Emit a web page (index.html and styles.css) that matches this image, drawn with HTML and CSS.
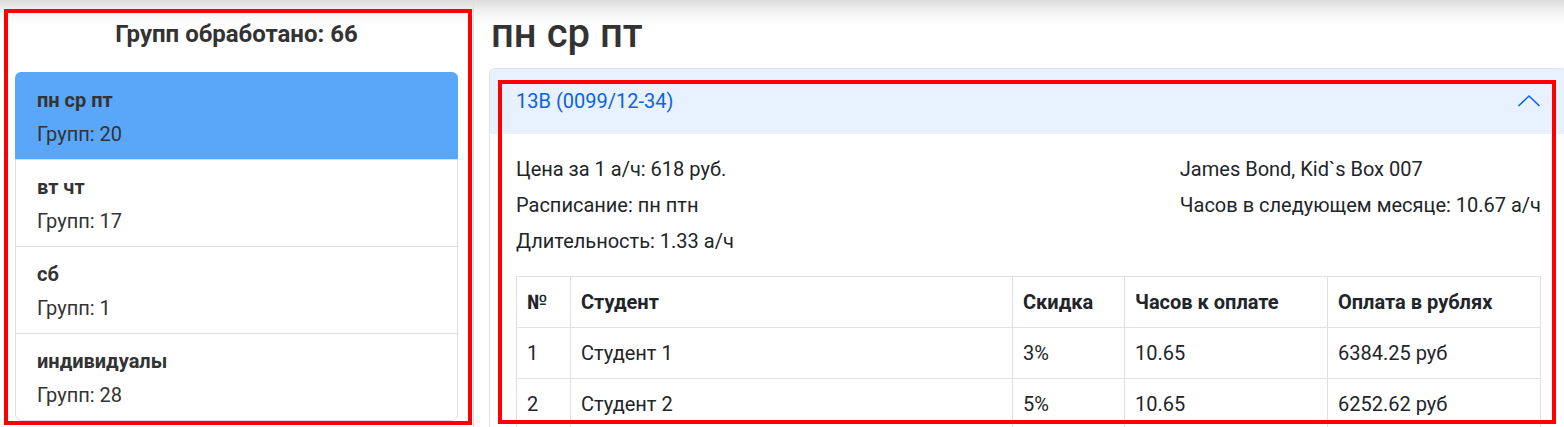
FILE: index.html
```html
<!DOCTYPE html>
<html lang="ru">
<head>
<meta charset="utf-8">
<title>Группы</title>
<link rel="stylesheet" href="styles.css">
</head>
<body>
<div class="page">
  <aside class="sidebar">
    <h2 class="sidebar-title">Групп обработано: 66</h2>
    <ul class="groups">
      <li class="group active">
        <div class="group-name">пн ср пт</div>
        <div class="group-count">Групп: 20</div>
      </li>
      <li class="group">
        <div class="group-name">вт чт</div>
        <div class="group-count">Групп: 17</div>
      </li>
      <li class="group">
        <div class="group-name">сб</div>
        <div class="group-count">Групп: 1</div>
      </li>
      <li class="group">
        <div class="group-name">индивидуалы</div>
        <div class="group-count">Групп: 28</div>
      </li>
    </ul>
  </aside>
  <main class="content">
    <h1 class="day-title">пн ср пт</h1>
    <section class="card">
      <div class="card-header">
        <span class="card-title">13В (0099/12-34)</span>
        <svg class="chevron" width="24" height="14" viewBox="0 0 24 14" aria-hidden="true">
          <polyline points="1.5,12 12,2 22.5,12" fill="none" stroke="#0c63e4" stroke-width="1.6"/>
        </svg>
      </div>
      <div class="card-body">
        <div class="info">
          <div class="info-col">
            <div>Цена за 1 а/ч: 618 руб.</div>
            <div>Расписание: пн птн</div>
            <div>Длительность: 1.33 а/ч</div>
          </div>
          <div class="info-col">
            <div>James Bond, Kid`s Box 007</div>
            <div>Часов в следующем месяце: 10.67 а/ч</div>
          </div>
        </div>
        <table class="students">
          <thead>
            <tr>
              <th class="c-num">№</th>
              <th class="c-name">Студент</th>
              <th class="c-disc">Скидка</th>
              <th class="c-hours">Часов к оплате</th>
              <th class="c-pay">Оплата в рублях</th>
            </tr>
          </thead>
          <tbody>
            <tr><td>1</td><td>Студент 1</td><td>3%</td><td>10.65</td><td>6384.25 руб</td></tr>
            <tr><td>2</td><td>Студент 2</td><td>5%</td><td>10.65</td><td>6252.62 руб</td></tr>
          </tbody>
        </table>
      </div>
    </section>
  </main>
</div>
<div class="mark mark-left"></div>
<div class="mark mark-right"></div>
</body>
</html>
```

FILE: styles.css
```css
html, body {
  margin: 0;
  padding: 0;
  height: 427px;
  overflow: hidden;
}
body {
  font-family: Roboto, "Liberation Sans", Arial, sans-serif;
  font-size: 20px;
  color: #212529;
  background: linear-gradient(#dcdcdc 0, #f6f6f6 14px, #ffffff 26px) no-repeat;
  position: relative;
}
.page {
  display: grid;
  grid-template-columns: 474px 1fr;
  height: 427px;
}
.sidebar {
  border-right: 1px solid #dedede;
  padding: 19px 15px 0;
  color: #333;
}
.sidebar-title {
  margin: 0 0 23px;
  font-size: 24px;
  line-height: 30px;
  font-weight: 700;
  text-align: center;
}
.groups {
  list-style: none;
  margin: 0;
  padding: 0;
  border: 1px solid #dedede;
  border-radius: 7px;
}
.group {
  padding: 15px 21px 13px;
  border-top: 1px solid #dedede;
}
.group:first-child {
  border-top: none;
}
.group.active {
  background: #5aa7f9;
  border-radius: 6px 6px 0 0;
  margin: -1px -1px 0;
  padding: 16px 22px 13px;
}
.group-name {
  font-weight: 700;
  line-height: 24px;
  margin-bottom: 10px;
}
.group-count {
  line-height: 24px;
}
.content {
  padding: 10px 0 0 15px;
  min-width: 0;
}
.day-title {
  margin: 0 0 10px;
  padding-left: 2px;
  font-size: 40px;
  line-height: 48px;
  font-weight: 500;
  color: #333;
}
.card {
  margin-right: -3px;
  border: 1px solid #dee2e6;
  border-bottom: none;
  border-radius: 6px 6px 0 0;
  overflow: hidden;
}
.card-header {
  display: flex;
  align-items: center;
  justify-content: space-between;
  background: #e7f1ff;
  color: #0c63e4;
  padding: 17px 25px 18px 26px;
  line-height: 30px;
}
.chevron {
  display: block;
}
.card-body {
  padding: 20px 25px 20px 26px;
}
.info {
  display: flex;
  justify-content: space-between;
  margin-bottom: 20px;
}
.info-col {
  display: flex;
  flex-direction: column;
  gap: 6px;
  line-height: 30px;
}
.students {
  width: 100%;
  border-collapse: collapse;
  table-layout: fixed;
  border: 1px solid #dee2e6;
}
.students th,
.students td {
  border: 1px solid #dee2e6;
  padding: 10px;
  line-height: 30px;
  text-align: left;
  white-space: nowrap;
}
.students th {
  font-weight: 700;
}
.c-num { width: 33px; }
.c-name { width: 421px; }
.c-disc { width: 91px; }
.c-hours { width: 182px; }
.mark {
  position: absolute;
  border: 4px solid #ff0000;
  box-sizing: border-box;
  pointer-events: none;
}
.mark-left {
  left: 4px;
  top: 9px;
  width: 468px;
  height: 416px;
}
.mark-right {
  left: 498px;
  top: 80px;
  width: 1058px;
  height: 344px;
}
```
